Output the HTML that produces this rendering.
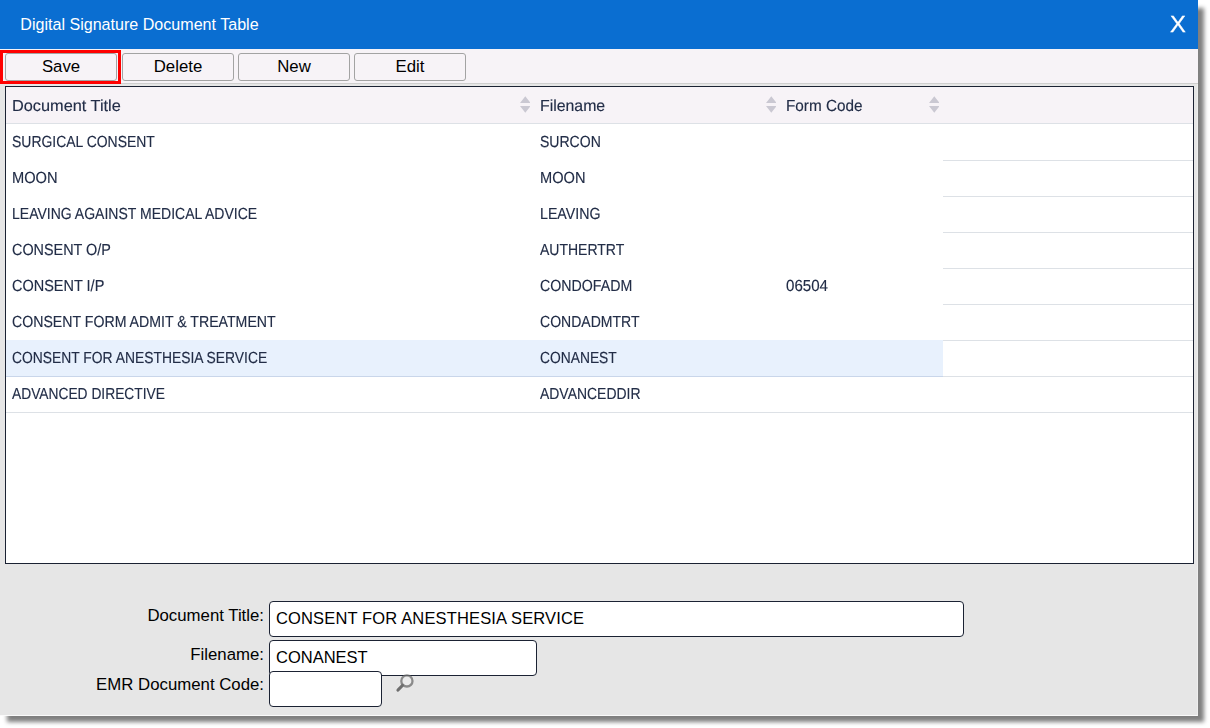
<!DOCTYPE html>
<html lang="en">
<head>
<meta charset="utf-8">
<title>Digital Signature Document Table</title>
<style>
html,body{margin:0;padding:0;}
body{width:1210px;height:728px;background:#fff;overflow:hidden;position:relative;
  font-family:"Liberation Sans",sans-serif;}
*{box-sizing:border-box;}
#dlg{position:absolute;left:0;top:0;width:1198px;height:716px;background:#e6e6e6;
  border-right:1px solid #eeeeee;border-bottom:1px solid #fafafa;
}
#shd{position:absolute;left:6.5px;top:7.5px;width:1197.7px;height:714.2px;background:rgba(0,0,0,.5);filter:blur(2.3px);}
#hdr{position:absolute;left:0;top:0;width:1198px;height:49px;background:#0a6ed1;color:#fff;}
#hdr .t{position:absolute;left:20.3px;top:14px;font-size:16.08px;line-height:20px;white-space:nowrap;}
#hdr .x{position:absolute;left:1170.3px;top:11px;font-size:23.25px;line-height:26px;transform:scaleX(1.02);transform-origin:0 0;text-rendering:geometricPrecision;-webkit-text-stroke:0.3px #fff;}
#bar{position:absolute;left:0;top:49px;width:1198px;height:35px;background:#f7f3f7;border-bottom:1px solid #cfcfcf;}
.btn{position:absolute;top:4px;width:112px;height:28px;border:1px solid #a3a3a3;border-radius:3px;
  background:#f7f3f7;color:#000;font-size:16.8px;line-height:25px;text-align:center;}
#red{position:absolute;left:0;top:50px;width:121px;height:34px;border:3px solid #f00;}
#tbl{position:absolute;left:5px;top:86px;width:1189px;height:478px;background:#fff;border:1px solid #1b2233;}
#th{position:absolute;left:0;top:0;width:1187px;height:37px;background:#f7f3f7;border-bottom:1px solid #dde1e6;}
.c{position:absolute;white-space:nowrap;font-size:16px;line-height:20px;color:#222d47;transform-origin:0 0;text-rendering:geometricPrecision;-webkit-text-stroke:0.15px #222d47;}
.row{position:absolute;left:0;width:1187px;height:36px;}
.sel{background:linear-gradient(90deg,#e8f1fd 937px,rgba(255,255,255,0) 937px);}
.ln{position:absolute;left:937px;width:250px;height:1px;background:#dde1e6;}
.lnf{position:absolute;left:0;width:1187px;height:1px;background:#dde1e6;}
.si{position:absolute;top:9px;width:10.6px;height:18px;}
.lbl{position:absolute;right:933px;white-space:nowrap;font-size:16.8px;line-height:20px;color:#000;text-align:right;}
.inp{position:absolute;left:269px;height:36px;background:#fff;border:1px solid #1b2233;border-radius:4px;
  font-size:16.5px;line-height:20px;color:#000;padding:6px 0 0 6px;white-space:nowrap;}
</style>
</head>
<body>
<div id="shd"></div>
<div id="dlg">
  <div id="hdr"><div class="t">Digital Signature Document Table</div><div class="x">X</div></div>
  <div id="bar">
    <div class="btn" style="left:5px">Save</div>
    <div class="btn" style="left:122px">Delete</div>
    <div class="btn" style="left:238px">New</div>
    <div class="btn" style="left:354px">Edit</div>
  </div>
  <div id="red"></div>

  <div id="tbl">
    <div id="th">
      <div class="c" style="left:5.7px;top:10px;transform:scaleX(1.0192)">Document Title</div><div class="c" style="left:533.7px;top:10px;transform:scaleX(0.9903)">Filename</div><div class="c" style="left:780.4px;top:10px;transform:scaleX(0.9563)">Form Code</div>
      <svg class="si" style="left:513.65px" viewBox="0 0 10.6 18"><path d="M5.3 0.3L10.6 6.9H0zM0 9.9h10.6L5.3 16.7z" fill="#cac8d2"/></svg>
      <svg class="si" style="left:759.65px" viewBox="0 0 10.6 18"><path d="M5.3 0.3L10.6 6.9H0zM0 9.9h10.6L5.3 16.7z" fill="#cac8d2"/></svg>
      <svg class="si" style="left:922.85px" viewBox="0 0 10.6 18"><path d="M5.3 0.3L10.6 6.9H0zM0 9.9h10.6L5.3 16.7z" fill="#cac8d2"/></svg>
    </div>

    <div class="row" style="top:37px"><div class="c" style="left:5.8px;top:9px;transform:scaleX(0.8719)">SURGICAL CONSENT</div><div class="c" style="left:533.8px;top:9px;transform:scaleX(0.8767)">SURCON</div></div>
    <div class="row" style="top:73px"><div class="c" style="left:6.1px;top:9px;transform:scaleX(0.9156)">MOON</div><div class="c" style="left:533.9px;top:9px;transform:scaleX(0.9127)">MOON</div></div>
    <div class="row" style="top:109px"><div class="c" style="left:6.2px;top:9px;transform:scaleX(0.8761)">LEAVING AGAINST MEDICAL ADVICE</div><div class="c" style="left:534.4px;top:9px;transform:scaleX(0.8866)">LEAVING</div></div>
    <div class="row" style="top:145px"><div class="c" style="left:6.1px;top:9px;transform:scaleX(0.8991)">CONSENT O/P</div><div class="c" style="left:534.0px;top:9px;transform:scaleX(0.8746)">AUTHERTRT</div></div>
    <div class="row" style="top:181px"><div class="c" style="left:6.1px;top:9px;transform:scaleX(0.9054)">CONSENT I/P</div><div class="c" style="left:534.2px;top:9px;transform:scaleX(0.8872)">CONDOFADM</div><div class="c" style="left:780.0px;top:9px;transform:scaleX(0.9435)">06504</div></div>
    <div class="row" style="top:217px"><div class="c" style="left:6.2px;top:9px;transform:scaleX(0.8836)">CONSENT FORM ADMIT &amp; TREATMENT</div><div class="c" style="left:534.2px;top:9px;transform:scaleX(0.8774)">CONDADMTRT</div></div>
    <div class="row sel" style="top:253px"><div class="c" style="left:6.3px;top:9px;transform:scaleX(0.8663)">CONSENT FOR ANESTHESIA SERVICE</div><div class="c" style="left:534.3px;top:9px;transform:scaleX(0.8636)">CONANEST</div></div>
    <div class="row" style="top:289px"><div class="c" style="left:6.0px;top:9px;transform:scaleX(0.8614)">ADVANCED DIRECTIVE</div><div class="c" style="left:534.0px;top:9px;transform:scaleX(0.8715)">ADVANCEDDIR</div></div>

    <div class="ln" style="top:73px"></div>
    <div class="ln" style="top:109px"></div>
    <div class="ln" style="top:145px"></div>
    <div class="ln" style="top:181px"></div>
    <div class="ln" style="top:217px"></div>
    <div class="ln" style="top:253px"></div>
    <div class="lnf" style="top:289px;background:linear-gradient(90deg,#c9d6ea 937px,#dde1e6 937px)"></div>
    <div class="lnf" style="top:325px"></div>
  </div>

  <div class="lbl" style="top:606px">Document Title:</div>
  <div class="lbl" style="top:645px">Filename:</div>
  <div class="lbl" style="top:675px">EMR Document Code:</div>
  <div class="inp" style="top:601px;width:695px;letter-spacing:0.145px">CONSENT FOR ANESTHESIA SERVICE</div>
  <div class="inp" style="top:640px;width:268px">CONANEST</div>
  <div class="inp" style="top:671px;width:113px"></div>
  <svg style="position:absolute;left:394px;top:672px;width:22px;height:22px" viewBox="394 672 22 22">
    <circle cx="406.9" cy="680.9" r="5.6" fill="rgba(255,255,255,.22)" stroke="rgba(105,105,105,.74)" stroke-width="2.3"/>
    <path d="M402.4 685.5L398 690" stroke="#6e6e6e" stroke-width="3.2" stroke-linecap="round"/>
  </svg>
</div>
</body>
</html>
